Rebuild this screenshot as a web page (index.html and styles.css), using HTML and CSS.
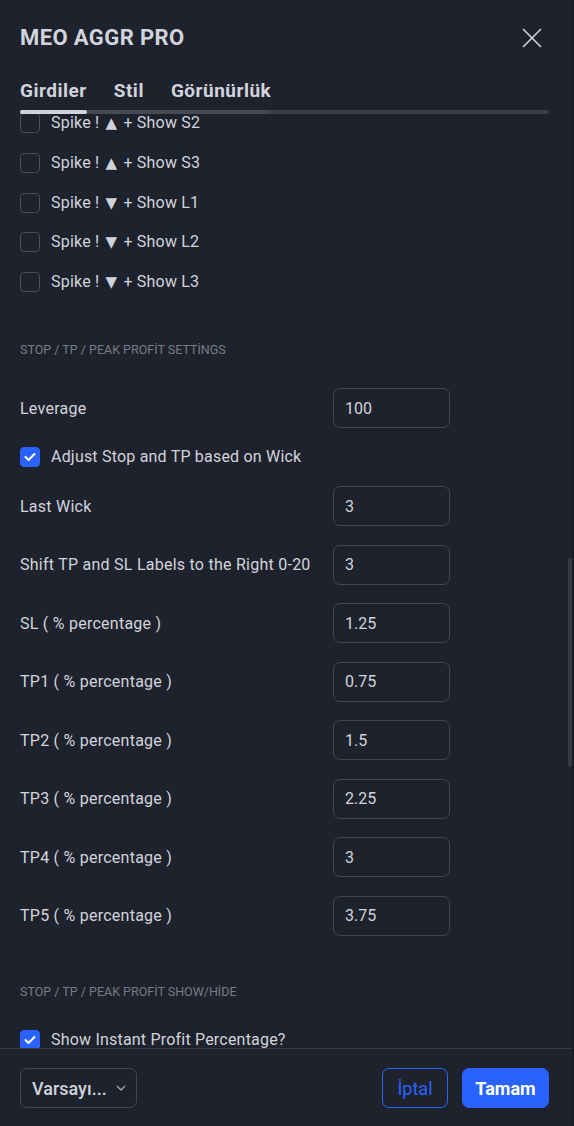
FILE: index.html
```html
<!DOCTYPE html>
<html lang="tr">
<head>
<meta charset="utf-8">
<title>MEO AGGR PRO</title>
<link rel="stylesheet" href="styles.css">
</head>
<body>
<div class="dialog">
  <div class="header">
    <div class="title-row">
      <h1 class="title">MEO AGGR PRO</h1>
      <button class="close" aria-label="Kapat">
        <svg width="20" height="20" viewBox="0 0 20 20"><path d="M1 1 L19 19 M19 1 L1 19" stroke="#d1d4dc" stroke-width="1.6" fill="none"/></svg>
      </button>
    </div>
    <div class="tabs">
      <span class="tab active">Girdiler</span>
      <span class="tab">Stil</span>
      <span class="tab">Görünürlük</span>
    </div>
    <div class="track"><div class="track-tabs"><div class="track-active"></div></div></div>
  </div>

  <div class="content">
    <div class="scroller">
      <div class="checks">
        <label class="check"><span class="box"></span><span>Spike ! <span class="tri">▲</span> + Show S2</span></label>
        <label class="check"><span class="box"></span><span>Spike ! <span class="tri">▲</span> + Show S3</span></label>
        <label class="check"><span class="box"></span><span>Spike ! <span class="tri">▼</span> + Show L1</span></label>
        <label class="check"><span class="box"></span><span>Spike ! <span class="tri">▼</span> + Show L2</span></label>
        <label class="check"><span class="box"></span><span>Spike ! <span class="tri">▼</span> + Show L3</span></label>
      </div>

      <div class="section-title first">STOP / TP / PEAK PROFİT SETTİNGS</div>

      <div class="field lev"><span class="label">Leverage</span><div class="input">100</div></div>
      <label class="check wick"><span class="box on"><svg width="12" height="10" viewBox="0 0 12 10"><path d="M1.5 5 L4.5 8 L10.5 2" stroke="#fff" stroke-width="2" fill="none" stroke-linecap="round" stroke-linejoin="round"/></svg></span><span>Adjust Stop and TP based on Wick</span></label>

      <div class="fields">
        <div class="field"><span class="label">Last Wick</span><div class="input">3</div></div>
        <div class="field"><span class="label">Shift TP and SL Labels to the Right 0-20</span><div class="input">3</div></div>
        <div class="field"><span class="label">SL ( % percentage )</span><div class="input">1.25</div></div>
        <div class="field"><span class="label">TP1 ( % percentage )</span><div class="input">0.75</div></div>
        <div class="field"><span class="label">TP2 ( % percentage )</span><div class="input">1.5</div></div>
        <div class="field"><span class="label">TP3 ( % percentage )</span><div class="input">2.25</div></div>
        <div class="field"><span class="label">TP4 ( % percentage )</span><div class="input">3</div></div>
        <div class="field"><span class="label">TP5 ( % percentage )</span><div class="input">3.75</div></div>
      </div>

      <div class="section-title second">STOP / TP / PEAK PROFİT SHOW/HİDE</div>
      <label class="check instant"><span class="box on"><svg width="12" height="10" viewBox="0 0 12 10"><path d="M1.5 5 L4.5 8 L10.5 2" stroke="#fff" stroke-width="2" fill="none" stroke-linecap="round" stroke-linejoin="round"/></svg></span><span>Show Instant Profit Percentage?</span></label>
    </div>
    <div class="scrollbar"></div>
  </div>

  <div class="footer">
    <div class="select">
      <span>Varsayı...</span>
      <svg width="10" height="6" viewBox="0 0 10 6"><path d="M1 1 L5 5 L9 1" stroke="#a3a6af" stroke-width="1.3" fill="none"/></svg>
    </div>
    <div class="actions">
      <button class="btn cancel">İptal</button>
      <button class="btn ok">Tamam</button>
    </div>
  </div>
</div>
<div class="chart-edge"></div>
</body>
</html>
```

FILE: styles.css
```css
html, body {
  margin: 0;
  padding: 0;
  background: #161a24;
}
body {
  display: flex;
  width: 574px;
  height: 1126px;
  overflow: hidden;
  font-family: Roboto, "Liberation Sans", sans-serif;
  color: #d1d4dc;
}
.dialog {
  width: 572px;
  height: 1126px;
  background: #1e222d;
  display: flex;
  flex-direction: column;
}
.chart-edge {
  width: 2px;
  height: 1126px;
  background: #181c27;
}
.header {
  padding: 24px 20px 0 20px;
}
.title-row {
  display: flex;
  justify-content: space-between;
  align-items: center;
  height: 28px;
}
.title {
  margin: 0;
  font-size: 22px;
  font-weight: 700;
  line-height: 28px;
  color: #d1d4dc;
  letter-spacing: 0.4px;
}
.close {
  background: none;
  border: 0;
  padding: 0;
  margin-right: 10px;
  width: 20px;
  height: 20px;
  display: flex;
}
.tabs {
  display: flex;
  gap: 27px;
  margin-top: 27px;
  height: 24px;
  align-items: center;
}
.tab {
  font-size: 19px;
  font-weight: 700;
  line-height: 24px;
  letter-spacing: 0.5px;
  color: #d1d4dc;
}
.track {
  margin-top: 7px;
  height: 4px;
  border-radius: 2px;
  background: #3a3e49;
  width: 529px;
}
.track-tabs {
  width: 251px;
  height: 4px;
  border-radius: 2px;
  background: #464a55;
}
.track-active {
  width: 67px;
  height: 4px;
  border-radius: 2px;
  background: #d1d4dc;
}
.content {
  flex: 1;
  overflow: hidden;
  display: flex;
  justify-content: space-between;
}
.scroller {
  padding: 0 20px;
  margin-top: -1px;
  display: flex;
  flex-direction: column;
}
.scrollbar {
  width: 4px;
  height: 209px;
  margin-top: 444px;
  border-radius: 2px;
  background: #363a45;
}
.checks {
  display: flex;
  flex-direction: column;
  gap: 19.75px;
}
.check {
  display: flex;
  align-items: center;
  gap: 11px;
  height: 20px;
  font-size: 16px;
  line-height: 20px;
  letter-spacing: 0.2px;
  color: #d1d4dc;
  white-space: nowrap;
}
.tri {
  font-family: "DejaVu Sans", sans-serif;
  font-size: 15px;
  margin: 0 2px;
}
.box {
  width: 18px;
  height: 18px;
  border: 1px solid #4a4e59;
  border-radius: 4px;
  display: flex;
  align-items: center;
  justify-content: center;
  flex: none;
}
.box.on {
  background: #2962ff;
  border-color: #2962ff;
}
.section-title {
  font-size: 12.5px;
  line-height: 16px;
  color: #787b86;
  white-space: nowrap;
}
.section-title.first {
  margin-top: 50px;
}
.section-title.second {
  margin-top: 48.5px;
}
.field {
  display: grid;
  grid-template-columns: 313px 117px;
  align-items: center;
  height: 40px;
}
.field.lev {
  margin-top: 30px;
}
.check.wick {
  margin-top: 19px;
}
.check.instant {
  margin-top: 30px;
}
.fields {
  margin-top: 19px;
  display: flex;
  flex-direction: column;
  gap: 18.5px;
}
.label {
  font-size: 16px;
  letter-spacing: 0.25px;
  color: #d1d4dc;
  white-space: nowrap;
}
.input {
  box-sizing: border-box;
  height: 40px;
  border: 1px solid #434651;
  border-radius: 7px;
  padding: 0 11px;
  display: flex;
  align-items: center;
  font-size: 16px;
  color: #d1d4dc;
}
.footer {
  border-top: 1px solid #363a45;
  height: 78px;
  padding: 19px 23px 0 20px;
  box-sizing: border-box;
  display: flex;
  justify-content: space-between;
  align-items: flex-start;
}
.select {
  box-sizing: border-box;
  width: 117px;
  height: 40px;
  border: 1px solid #434651;
  border-radius: 7px;
  padding: 0 10px 0 11px;
  display: flex;
  align-items: center;
  justify-content: space-between;
  font-size: 18px;
  font-weight: 500;
  color: #d1d4dc;
}
.actions {
  display: flex;
  gap: 14px;
}
.btn {
  box-sizing: border-box;
  height: 40px;
  border-radius: 7px;
  font-family: Roboto, "Liberation Sans", sans-serif;
  font-size: 18px;
  padding: 0;
}
.cancel {
  width: 66px;
  background: transparent;
  border: 1px solid #2962ff;
  color: #2962ff;
}
.ok {
  width: 87px;
  background: #2962ff;
  border: 1px solid #2962ff;
  color: #ffffff;
  font-weight: 700;
}
```
